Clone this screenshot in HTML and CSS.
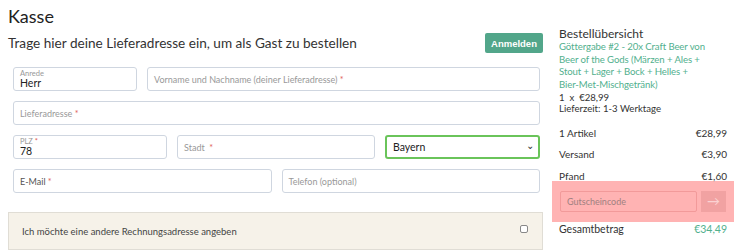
FILE: index.html
```html
<!DOCTYPE HTML>
<html>
<head>
<meta charset="utf-8">
<title>Kasse</title>
<link rel="stylesheet" href="styles.css">
</head>
<body>
<div class="page">
    <div class="main">
        <h1>Kasse</h1>
        <div class="subhead">
            <p>Trage hier deine Lieferadresse ein, um als Gast zu bestellen</p>
            <button class="loginBtn">Anmelden</button>
        </div>

        <!-- Lieferadresse -->
        <div class="form">
            <div class="row">
                <div class="field salut"><label>Anrede</label><span class="val">Herr</span></div>
                <div class="field grow"><span class="ph">Vorname und Nachname (deiner Lieferadresse) <em>*</em></span></div>
            </div>
            <div class="row">
                <div class="field grow"><span class="ph">Lieferadresse <em>*</em></span></div>
            </div>
            <div class="row">
                <div class="field zip"><label>PLZ <em>*</em></label><span class="val">78</span></div>
                <div class="field city"><span class="ph">Stadt&nbsp; <em>*</em></span></div>
                <div class="field state"><span class="val">Bayern</span><span class="chev">&#8964;</span></div>
            </div>
            <div class="row">
                <div class="field grow"><span class="ph dark">E-Mail <em>*</em></span></div>
                <div class="field grow"><span class="ph">Telefon (optional)</span></div>
            </div>
        </div>

        <div class="billing">
            <span>Ich möchte eine andere Rechnungsadresse angeben</span>
            <span class="check"></span>
        </div>
    </div>

    <div class="side">
        <h4>Bestellübersicht</h4>
        <p class="prodName">Göttergabe #2 - 20x Craft Beer von<br>Beer of the Gods (Märzen + Ales +<br>Stout + Lager + Bock + Helles +<br>Bier-Met-Mischgetränk)</p>
        <p class="small">1&nbsp; x&nbsp; €28,99</p>
        <p class="small">Lieferzeit: 1-3 Werktage</p>

        <ul class="sums">
            <li><span>1 Artikel</span><span>€28,99</span></li>
            <li><span>Versand</span><span>€3,90</span></li>
            <li><span>Pfand</span><span>€1,60</span></li>
        </ul>

        <div class="coupon">
            <div class="couponInp">Gutscheincode</div>
            <div class="couponBtn">&#8594;</div>
        </div>

        <div class="total"><span>Gesamtbetrag</span><span class="green">€34,49</span></div>
    </div>
</div>
</body>
</html>
```

FILE: styles.css
```css
h1,h4,ul,p,li{
   margin: 0;
   padding: 0;
}
li{
   list-style: none;
}
body{
   margin: 0;
   font-family: "Lato", "Noto Sans", sans-serif;
   color: #333;
   background: #fff;
}
.page{
   display: flex;
   padding: 0 5px 0 8px;
   gap: 16px;
}
.main{
   width: 535px;
}
h1{
   font-size: 18px;
   font-weight: 400;
   color: #222;
   padding-top: 3px;
   line-height: 26px;
}
.subhead{
   display: flex;
   align-items: center;
   justify-content: space-between;
   margin-top: 4px;
}
.subhead p{
   font-size: 13.6px;
   color: #333;
}
.loginBtn{
   width: 58px;
   height: 20px;
   border: none;
   border-radius: 2px;
   background: #52a68a;
   color: #fff;
   font-family: "Liberation Sans", sans-serif;
   font-weight: bold;
   font-size: 9.5px;
   padding: 0;
}
.form{
   padding: 14px 3px 0 5px;
   display: flex;
   flex-direction: column;
   gap: 10px;
}
.row{
   display: flex;
   gap: 10px;
}
.field{
   height: 24px;
   box-sizing: border-box;
   border: 1px solid #cfd6e0;
   border-radius: 3px;
   padding: 0 6px;
   display: flex;
   flex-direction: column;
   justify-content: center;
   font-size: 9px;
   color: #999;
}
.grow{
   flex: 1;
}
.salut{
   width: 124px;
}
.zip{
   width: 154px;
}
.city{
   width: 198px;
}
.state{
   width: 155px;
   border: 2px solid #6ac45a;
   flex-direction: row;
   align-items: center;
   justify-content: space-between;
   padding: 0 4px 0 6px;
}
.field label{
   font-size: 7.5px;
   line-height: 8px;
   color: #999;
}
.val{
   font-size: 10.5px;
   line-height: 11px;
   color: #222;
}
.ph{
   font-size: 9px;
}
.ph.dark{
   color: #555;
}
em{
   font-style: normal;
   color: #e0625a;
}
.chev{
   font-size: 10px;
   color: #333;
   line-height: 8px;
   margin-top: -4px;
}
.billing{
   margin-top: 19px;
   height: 38px;
   box-sizing: border-box;
   border: 1px solid #e0ddd5;
   background: #f6f2e9;
   display: flex;
   align-items: center;
   justify-content: space-between;
   padding: 0 14px 0 13px;
   font-size: 9.5px;
   color: #444;
}
.check{
   width: 6px;
   height: 6px;
   border: 1px solid #888;
   border-radius: 2px;
   background: #fff;
   margin-top: -5px;
}
/* Bestellübersicht */
.side{
   width: 168px;
   padding-top: 27px;
   font-size: 10px;
   color: #333;
}
.side h4{
   font-weight: 400;
   font-size: 12px;
   line-height: 14px;
   color: #333;
}
.prodName{
   color: #52b08e;
   font-size: 9.6px;
   line-height: 12.7px;
   letter-spacing: -0.1px;
   white-space: nowrap;
}
.small{
   font-size: 9.6px;
   line-height: 11.5px;
}
.sums{
   margin-top: 10px;
}
.sums li{
   display: flex;
   justify-content: space-between;
   height: 21.5px;
   line-height: 16px;
}
.coupon{
   margin: -8px -7px 0 -7px;
   height: 41px;
   background: #ffb3b3;
   display: flex;
   align-items: center;
   gap: 4px;
   padding: 0 8px 0 8px;
}
.couponInp{
   width: 137px;
   height: 21px;
   box-sizing: border-box;
   border: 1px solid #f29a9a;
   border-radius: 2px;
   padding: 0 6px;
   line-height: 19px;
   font-size: 9px;
   color: #a08080;
}
.couponBtn{
   width: 25px;
   height: 21px;
   background: #f1a2a2;
   color: #fbd2d2;
   text-align: center;
   line-height: 20px;
   font-size: 13px;
}
.total{
   display: flex;
   justify-content: space-between;
   margin-top: 0;
   line-height: 14px;
   font-size: 10.5px;
}
.green{
   color: #52b08e;
}
```
